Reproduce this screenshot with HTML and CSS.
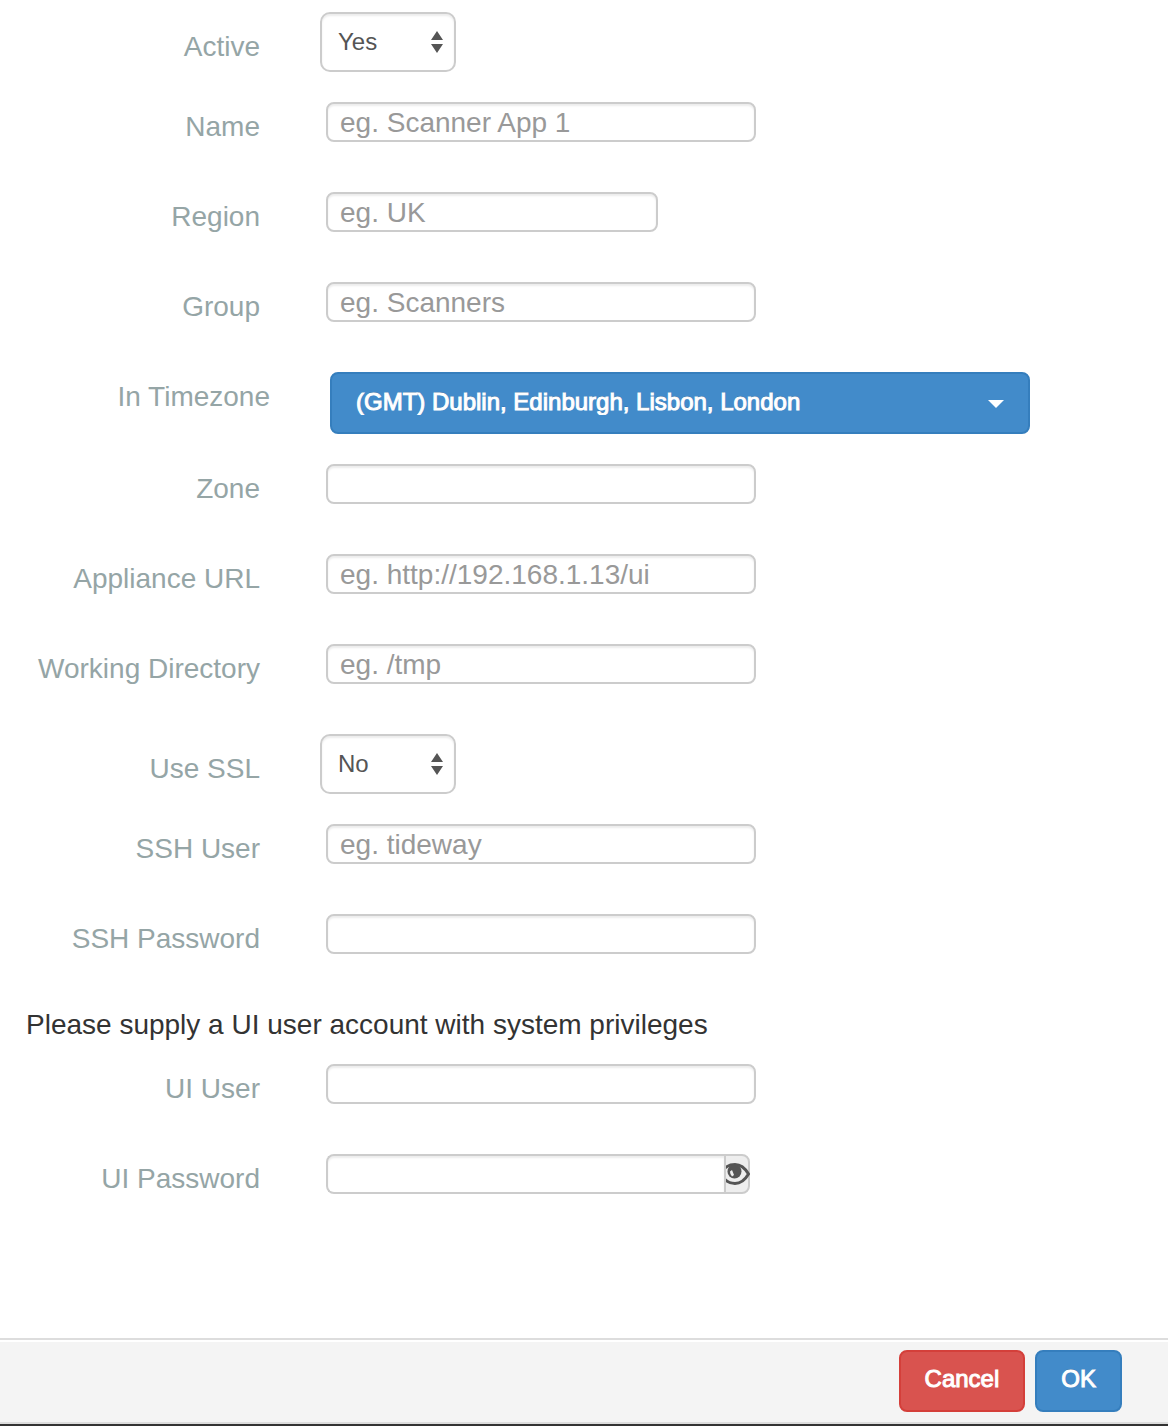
FILE: index.html
```html
<!DOCTYPE html>
<html lang="en">
<head>
<meta charset="utf-8">
<title>Appliance settings</title>
<link rel="stylesheet" href="styles.css">
</head>
<body>
<form class="dialog">
  <div class="fields">
    <div class="row row-select">
      <label for="active">Active</label>
      <div class="select-box">
        <select id="active" class="choice"><option>Yes</option><option>No</option></select>
        <svg class="arrows" viewBox="0 0 12 22" aria-hidden="true"><path d="M6 0l6 9H0zM6 22l6-9H0z"/></svg>
      </div>
    </div>
    <div class="row">
      <label for="name">Name</label>
      <input id="name" class="text" type="text" placeholder="eg. Scanner App 1">
    </div>
    <div class="row">
      <label for="region">Region</label>
      <input id="region" class="text text-short" type="text" placeholder="eg. UK">
    </div>
    <div class="row">
      <label for="group">Group</label>
      <input id="group" class="text" type="text" placeholder="eg. Scanners">
    </div>
    <div class="row row-zone">
      <label for="timezone">In Timezone</label>
      <div class="zone-box">
        <select id="timezone" class="zone"><option>(GMT) Dublin, Edinburgh, Lisbon, London</option></select>
        <svg class="caret" viewBox="0 0 16 8" aria-hidden="true"><path d="M0 0h16L8 8z"/></svg>
      </div>
    </div>
    <div class="row">
      <label for="zone">Zone</label>
      <input id="zone" class="text" type="text">
    </div>
    <div class="row">
      <label for="url">Appliance URL</label>
      <input id="url" class="text" type="text" placeholder="eg. http://192.168.1.13/ui">
    </div>
    <div class="row">
      <label for="directory">Working Directory</label>
      <input id="directory" class="text" type="text" placeholder="eg. /tmp">
    </div>
    <div class="row row-select">
      <label for="ssl">Use SSL</label>
      <div class="select-box">
        <select id="ssl" class="choice"><option>No</option><option>Yes</option></select>
        <svg class="arrows" viewBox="0 0 12 22" aria-hidden="true"><path d="M6 0l6 9H0zM6 22l6-9H0z"/></svg>
      </div>
    </div>
    <div class="row">
      <label for="ssh-user">SSH User</label>
      <input id="ssh-user" class="text" type="text" placeholder="eg. tideway">
    </div>
    <div class="row">
      <label for="ssh-password">SSH Password</label>
      <input id="ssh-password" class="text" type="password">
    </div>
    <p class="note">Please supply a UI user account with system privileges</p>
    <div class="row">
      <label for="ui-user">UI User</label>
      <input id="ui-user" class="text" type="text">
    </div>
    <div class="row">
      <label for="ui-password">UI Password</label>
      <div class="password">
        <input id="ui-password" class="text" type="password">
        <button type="button" class="reveal" aria-label="Show password">
          <svg viewBox="0 0 24 24" aria-hidden="true">
            <path class="lid" d="M-1 6Q3 2.500 9 2.500C15 2.500 19 6 22.500 12C19 18 15 21.500 9 21.500Q3 21.500-1 17.500"/>
            <circle cx="8.500" cy="9.500" r="7"/>
            <path class="glint" d="M4 9.500l2-1.500 2 5-2 1.500q-2-2-2-5z"/>
          </svg>
        </button>
      </div>
    </div>
  </div>
  <footer class="actions">
    <button type="button" class="button button-cancel">Cancel</button>
    <button type="submit" class="button button-ok">OK</button>
  </footer>
</form>
</body>
</html>
```
FILE: styles.css
```css
* {
  box-sizing: border-box;
}

body {
  margin: 0;
  background: #fff;
  color: #333;
  font: 28px/40px "Liberation Sans", Arial, sans-serif;
}

input,
select,
button {
  margin: 0;
  font-family: inherit;
}

.dialog {
  display: flex;
  flex-direction: column;
  min-height: 100vh;
  border-bottom: 2px solid #333;
}

.fields {
  flex: 1;
  padding: 12px 26px 0 0;
}

.row {
  display: grid;
  grid-template-columns: 260px minmax(0, 1fr);
  column-gap: 66px;
  align-items: start;
  min-height: 60px;
  margin-bottom: 30px;
}

.row label {
  padding-top: 5px;
  color: #95a5a6;
  text-align: right;
  white-space: nowrap;
}

.row-select {
  column-gap: 60px;
}

.row-select label {
  padding-top: 15px;
}

.row-zone {
  grid-template-columns: 270px minmax(0, 1fr);
  column-gap: 60px;
}

.text {
  width: 100%;
  max-width: 430px;
  height: 40px;
  padding: 2px 12px 0;
  border: 2px solid #ccc;
  border-radius: 8px;
  background: #fff;
  box-shadow: inset 0 2px 2px rgba(0, 0, 0, 0.075);
  color: #555;
  font-size: 28px;
}

.text::placeholder {
  color: #999;
  opacity: 1;
}

.text-short {
  max-width: 332px;
}

.select-box,
.zone-box {
  position: relative;
  width: 100%;
  max-width: 136px;
}

.choice,
.zone {
  display: block;
  width: 100%;
  appearance: none;
  font-size: 24px;
}

.choice {
  height: 60px;
  padding: 0 36px 2px 16px;
  border: 2px solid #ccc;
  border-radius: 10px;
  background: #fff;
  box-shadow: inset 0 2px 2px rgba(0, 0, 0, 0.075);
  color: #555;
}

.arrows,
.caret {
  position: absolute;
  pointer-events: none;
}

.arrows {
  top: 19px;
  right: 13px;
  width: 12px;
  height: 22px;
  fill: #555;
}

.zone-box {
  max-width: 700px;
}

.zone {
  height: 62px;
  padding: 0 60px 4px 24px;
  border: 2px solid #357ebd;
  border-radius: 8px;
  background: #428bca;
  color: #fff;
  text-shadow: 0 -1px 0 rgba(0, 0, 0, 0.25);
  -webkit-text-stroke: 1px #fff;
}

.caret {
  top: 28px;
  right: 26px;
  width: 16px;
  height: 8px;
  fill: #fff;
}

.note {
  margin: 0 0 20px;
  padding: 1px 0 0 26px;
  height: 40px;
}

.password {
  display: flex;
  max-width: 424px;
}

.password .text {
  flex: 1;
  min-width: 0;
  border-right: 0;
  border-radius: 8px 0 0 8px;
}

.reveal {
  width: 26px;
  height: 40px;
  padding: 0;
  border: 2px solid #ccc;
  border-radius: 0 8px 8px 0;
  background: #eee;
}

.reveal svg {
  display: block;
  width: 24px;
  height: 24px;
  fill: #555;
}

.reveal .lid {
  fill: none;
  stroke: #555;
  stroke-width: 3px;
}

.reveal .glint {
  fill: #eee;
}

.actions {
  display: flex;
  justify-content: flex-end;
  gap: 10px;
  padding: 10px 46px;
  border-top: 2px solid #ddd;
  border-bottom: 2px solid #ddd;
  background: #f4f4f4;
  box-shadow: inset 0 2px 0 #fff;
}

.button {
  height: 62px;
  padding: 0 24px 4px;
  border: 2px solid;
  border-radius: 8px;
  color: #fff;
  font-size: 24px;
  -webkit-text-stroke: 1px #fff;
}

.button-cancel {
  border-color: #d43f3a;
  background: #d9534f;
}

.button-ok {
  border-color: #357ebd;
  background: #428bca;
  text-shadow: 0 -1px 0 rgba(0, 0, 0, 0.25);
}
```
